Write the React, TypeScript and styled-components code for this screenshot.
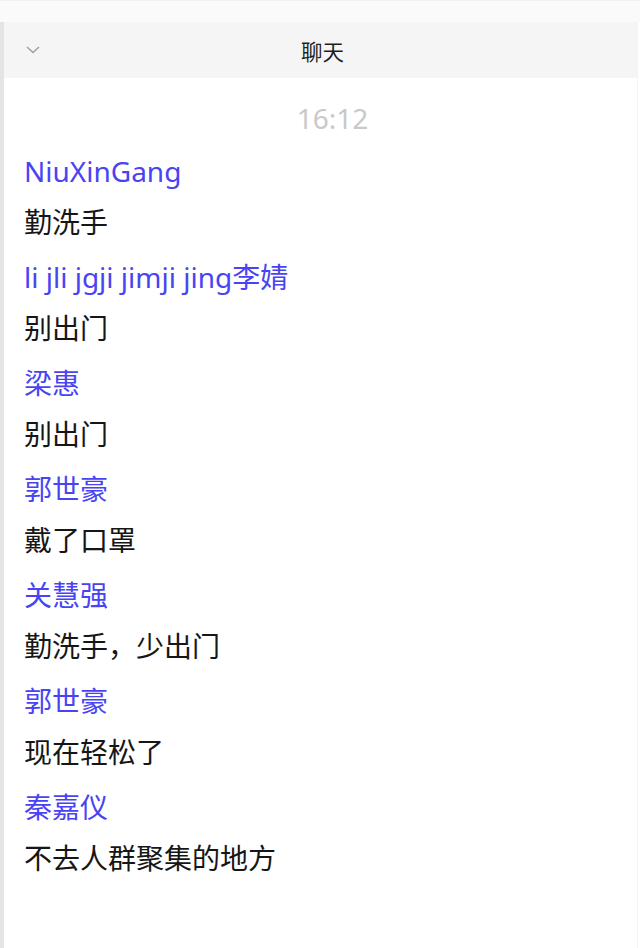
import React from "react";
import styled, { createGlobalStyle } from "styled-components";

interface Message {
  id: number;
  name: string;
  text: string;
}

const messages: Message[] = [
  { id: 1, name: "NiuXinGang", text: "勤洗手" },
  { id: 2, name: "li jli jgji jimji jing李婧", text: "别出门" },
  { id: 3, name: "梁惠", text: "别出门" },
  { id: 4, name: "郭世豪", text: "戴了口罩" },
  { id: 5, name: "关慧强", text: "勤洗手，少出门" },
  { id: 6, name: "郭世豪", text: "现在轻松了" },
  { id: 7, name: "秦嘉仪", text: "不去人群聚集的地方" },
];

const GlobalStyle = createGlobalStyle`
  html, body {
    margin: 0;
    padding: 0;
    background: #ffffff;
  }
  body {
    font-family: "Noto Sans", "Noto Sans CJK SC", sans-serif;
  }
`;

const Page = styled.div`
  width: 640px;
  height: 948px;
  display: flex;
  flex-direction: column;
  overflow: hidden;
  background: #ffffff;
`;

const TopStrip = styled.div`
  height: 21px;
  background: #fafafa;
  border-top: 1px solid #f2f2f2;
`;

const Panel = styled.div`
  flex: 1;
  display: flex;
  flex-direction: column;
  border-left: 4px solid #e4e4e4;
  border-right: 1px solid #f3f3f3;
  margin-right: 2px;
`;

const Header = styled.div`
  height: 56px;
  background: #f5f5f5;
  display: flex;
  align-items: center;
  justify-content: center;
  position: relative;
`;

const Back = styled.span`
  position: absolute;
  left: 22px;
  top: 24px;
  display: flex;
`;

const Title = styled.span`
  font-family: "Noto Sans CJK SC", sans-serif;
  font-size: 21.5px;
  color: #1e1e1e;
  margin-left: 4px;
`;

const ChatList = styled.div`
  display: flex;
  flex-direction: column;
  padding: 20px 20px 0 20px;
`;

const Time = styled.div`
  text-align: center;
  padding-left: 24px;
  font-family: "Noto Sans", sans-serif;
  font-size: 28px;
  line-height: 40px;
  color: #c9c9c9;
  margin-bottom: 15px;
`;

const Item = styled.div`
  display: flex;
  flex-direction: column;
  margin-bottom: 20px;
`;

const Name = styled.div`
  font-family: "Noto Sans", "Noto Sans CJK SC", sans-serif;
  font-size: 28px;
  line-height: 36px;
  color: #4844f3;
`;

const Text = styled.div`
  font-family: "Noto Sans CJK SC", sans-serif;
  font-size: 28px;
  line-height: 36px;
  color: #161616;
  margin-top: 14px;
`;

const App = () => {
  return (
    <Page>
      <GlobalStyle />
      <TopStrip />
      <Panel>
        <Header>
          <Back>
            <svg width="14" height="8" viewBox="0 0 14 8" fill="none">
              <path d="M1 1l6 5.5L13 1" stroke="#a0a0a0" strokeWidth="1.6" />
            </svg>
          </Back>
          <Title>聊天</Title>
        </Header>
        <ChatList>
          <Time>16:12</Time>
          {messages.map((m) => (
            <Item key={m.id}>
              <Name>{m.name}</Name>
              <Text>{m.text}</Text>
            </Item>
          ))}
        </ChatList>
      </Panel>
    </Page>
  );
};

export default App;
